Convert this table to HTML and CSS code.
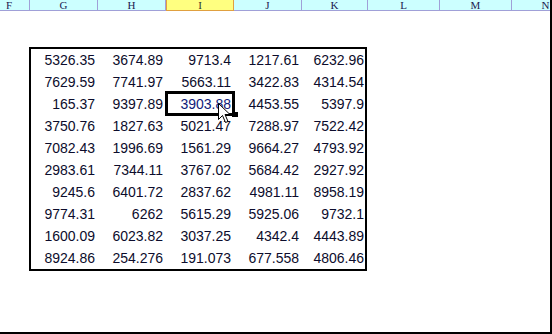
FILE: index.html
```html
<!DOCTYPE html>
<html>
<head>
<meta charset="utf-8">
<link rel="stylesheet" href="styles.css">
</head>
<body>
<div class="page">
  <div class="colhead">
    <div class="ch ch-f">F</div>
    <div class="ch">G</div>
    <div class="ch">H</div>
    <div class="ch ch-sel">I</div>
    <div class="ch">J</div>
    <div class="ch ch-k">K</div>
    <div class="ch ch-w">L</div>
    <div class="ch ch-w">M</div>
    <div class="ch">N</div>
  </div>
  <div class="box">
    <div>5326.35</div><div>3674.89</div><div>9713.4</div><div>1217.61</div><div>6232.96</div>
    <div>7629.59</div><div>7741.97</div><div>5663.11</div><div>3422.83</div><div>4314.54</div>
    <div>165.37</div><div>9397.89</div><div class="active">3903.88</div><div>4453.55</div><div>5397.9</div>
    <div>3750.76</div><div>1827.63</div><div>5021.47</div><div>7288.97</div><div>7522.42</div>
    <div>7082.43</div><div>1996.69</div><div>1561.29</div><div>9664.27</div><div>4793.92</div>
    <div>2983.61</div><div>7344.11</div><div>3767.02</div><div>5684.42</div><div>2927.92</div>
    <div>9245.6</div><div>6401.72</div><div>2837.62</div><div>4981.11</div><div>8958.19</div>
    <div>9774.31</div><div>6262</div><div>5615.29</div><div>5925.06</div><div>9732.1</div>
    <div>1600.09</div><div>6023.82</div><div>3037.25</div><div>4342.4</div><div>4443.89</div>
    <div>8924.86</div><div>254.276</div><div>191.073</div><div>677.558</div><div>4806.46</div>
  </div>
  <div class="selection"></div>
  <div class="handle"></div>
  <svg class="cursor" width="13" height="21" viewBox="0 0 13 21">
    <path d="M0.5 0.5 L0.5 16.5 L4.5 12.5 L7.5 19.5 L10 18.5 L7 11.5 L12 11.5 Z" fill="#fff" stroke="#000" stroke-width="1" stroke-linejoin="miter"/>
  </svg>
</div>
</body>
</html>
```
FILE: styles.css
```css
html, body {
  margin: 0;
  padding: 0;
  background: #fff;
}

.page {
  position: relative;
  width: 550px;
  height: 332px;
  border-right: 2px solid #000;
  border-bottom: 2px solid #000;
  overflow: hidden;
  background: #fff;
}

.colhead {
  display: flex;
  height: 10px;
  border-bottom: 1px solid #a0a0d8;
  background: #ccffff;
  white-space: nowrap;
}

.ch {
  flex: 0 0 68px;
  box-sizing: border-box;
  height: 10px;
  border-right: 1px solid #a0a0d8;
  font-family: "Liberation Serif", "DejaVu Serif", serif;
  font-size: 11px;
  line-height: 10px;
  text-align: center;
  color: #202050;
  overflow: hidden;
}

.ch-f {
  flex-basis: 41px;
  margin-left: -11px;
}

.ch-k {
  flex-basis: 66px;
}

.ch-w {
  flex-basis: 72px;
}

.ch-sel {
  background: #ffff80;
  border-left: 1px solid #e0a040;
  border-right: 1px solid #e0a040;
  box-shadow: inset 0 -1px 0 #e0a040;
  height: 11px;
  color: #303030;
}

.box {
  display: grid;
  grid-template-columns: 67px 68px 68px 68px 63px;
  grid-auto-rows: 22px;
  width: 334px;
  margin: 36px 0 0 29px;
  border: 2px solid #000;
  font-family: "Liberation Sans", Arial, sans-serif;
  font-size: 14px;
  line-height: 22px;
  color: #0c0c2c;
}

.box > div {
  text-align: right;
  padding-right: 3px;
  white-space: nowrap;
}

.box > div:nth-child(5n) {
  padding-right: 1px;
}

.box > .active {
  color: #10207a;
}

.selection {
  position: absolute;
  left: 165px;
  top: 91px;
  width: 70px;
  height: 25px;
  box-sizing: border-box;
  border: 3px solid #000;
}

.handle {
  position: absolute;
  left: 232px;
  top: 112px;
  width: 6px;
  height: 5px;
  background: #000;
}

.cursor {
  position: absolute;
  left: 218px;
  top: 103px;
}
```
